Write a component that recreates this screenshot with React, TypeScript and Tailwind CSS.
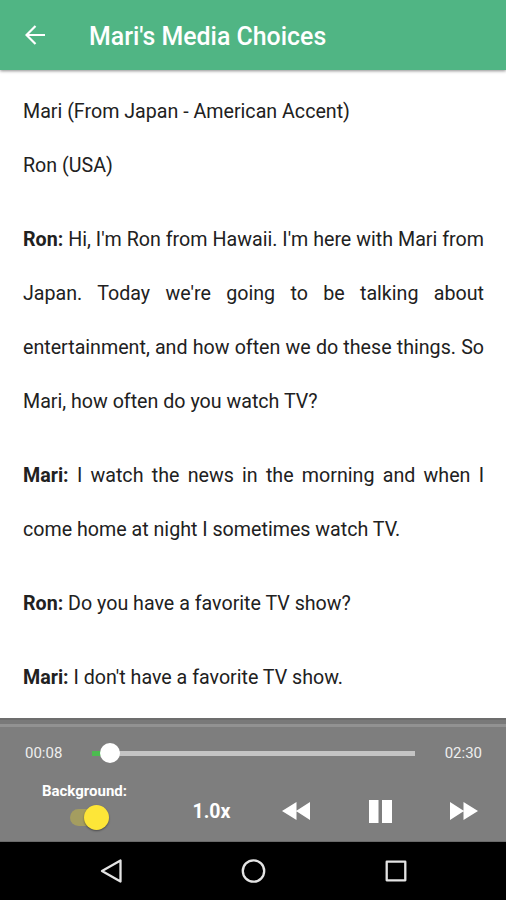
import { useState } from 'react';

interface ILine {
  speaker: string;
  text: string;
}

const LINES: ILine[] = [
  {
    speaker: 'Ron',
    text: "Hi, I'm Ron from Hawaii. I'm here with Mari from Japan. Today we're going to be talking about entertainment, and how often we do these things. So Mari, how often do you watch TV?",
  },
  {
    speaker: 'Mari',
    text: 'I watch the news in the morning and when I come home at night I sometimes watch TV.',
  },
  { speaker: 'Ron', text: 'Do you have a favorite TV show?' },
  { speaker: 'Mari', text: "I don't have a favorite TV show." },
];

const Header = ({ title }: { title: string }) => (
  <header className="relative z-10 flex h-[70px] shrink-0 items-center bg-[#50b584] pl-[25px] text-white shadow-[0_1px_3px_rgba(0,0,0,0.45)]">
    <button aria-label="Back">
      <svg width="20" height="20" viewBox="0 0 20 20" fill="none" stroke="currentColor" strokeWidth="2.2">
        <path d="M20 10H2M10.5 1L1.5 10l9 9" />
      </svg>
    </button>
    <h1 className="ml-[44px] mt-1 text-[24.9px] font-medium leading-8">{title}</h1>
  </header>
);

const Transcript = () => (
  <main className="flex-1 overflow-hidden pl-[23px] pr-[22px] pt-[15px] text-[19.65px] leading-[54px] text-[#212121]">
    <p className="mb-5">
      Mari (From Japan - American Accent)
      <br />
      Ron (USA)
    </p>
    {LINES.map((line, index) => (
      <p key={index} className="mb-5 text-justify">
        <b className="font-bold">{`${line.speaker}:`}</b> {line.text}
      </p>
    ))}
  </main>
);

const Player = () => {
  const [playing, setPlaying] = useState(true);
  const [background, setBackground] = useState(true);

  return (
    <section className="h-[124px] shrink-0 bg-[#7e7e7e] text-white">
      <div className="h-[2px] bg-[#6d6d6d]" />
      <div className="h-1 bg-[#797979]" />
      <div className="h-[3px] bg-[#929292]" />

      {/* Progress */}
      <div className="flex h-[52px] items-center pl-[25px] pr-6 text-[15px] text-[#eeeeee]">
        <span className="w-[67px]">00:08</span>
        <div className="relative flex h-5 w-[323px] items-center">
          <div className="h-[5px] w-[18px] bg-[#4cbb50]" />
          <div className="h-[5px] flex-1 bg-[#c4c4c4]" />
          <div className="absolute left-2 top-0 size-5 rounded-full bg-white" />
        </div>
        <span className="ml-auto">02:30</span>
      </div>

      {/* Controls */}
      <div className="flex h-[62px]">
        <div className="flex w-[169px] flex-col items-center pt-[3px]">
          <span className="text-[15px] font-bold leading-[18px]">Background:</span>
          <button
            aria-label="Background"
            onClick={() => setBackground(!background)}
            className="ml-[7px] mt-[5px] flex h-[25px] w-[38px] items-center pl-px"
          >
            <span className="h-[17px] w-[30px] shrink-0 rounded-full bg-[#a49d60]" />
            <span
              className={`-ml-4 size-[25px] shrink-0 rounded-full shadow-[0_1px_2px_rgba(0,0,0,0.4)] ${background ? 'bg-[#fde638]' : 'bg-gray-200'}`}
            />
          </button>
        </div>
        <div className="flex flex-1 items-start pl-[23px] pt-[15px]">
          <button className="h-[34px] w-[39px] pt-0.5 text-[19.5px] font-bold">1.0x</button>
          <button aria-label="Rewind" className="ml-[51px] flex h-[34px] items-center">
            <svg width="28" height="18" viewBox="0 0 28 18" fill="currentColor">
              <path d="M14.5 0v18L0 9zM28 0v18L14 9z" />
            </svg>
          </button>
          <button
            aria-label="Play or pause"
            onClick={() => setPlaying(!playing)}
            className="ml-[59px] flex h-[34px] items-center"
          >
            <svg width="23" height="23" viewBox="0 0 23 23" fill="currentColor">
              {playing ? <path d="M0 0h9.5v23H0zM13 0h10v23H13z" /> : <path d="M2 0l20 11.5L2 23z" />}
            </svg>
          </button>
          <button aria-label="Forward" className="ml-[58px] flex h-[34px] items-center">
            <svg width="28" height="18" viewBox="0 0 28 18" fill="currentColor">
              <path d="M0 0v18l14-9zM13.5 0v18L28 9z" />
            </svg>
          </button>
        </div>
      </div>
      <div className="h-px bg-[#6a6a6a]" />
    </section>
  );
};

const NavBar = () => (
  <nav className="flex h-[58px] shrink-0 items-center bg-black pl-[100px] text-[#e4e4e4]">
    <svg width="24" height="24" viewBox="0 0 24 24" fill="none" stroke="currentColor" strokeWidth="2.3" strokeLinejoin="round">
      <path d="M20.5 1.5v21L2 12z" />
    </svg>
    <svg className="ml-[117px]" width="25" height="24" viewBox="0 0 25 24" fill="none" stroke="currentColor" strokeWidth="2.3">
      <circle cx="12.5" cy="12" r="10.7" />
    </svg>
    <svg className="ml-[118px]" width="24" height="24" viewBox="0 0 24 24" fill="none" stroke="currentColor" strokeWidth="2.3" strokeLinejoin="round">
      <path d="M2.7 2.7h18.6v18.6H2.7z" />
    </svg>
  </nav>
);

export default function App() {
  return (
    <div className="flex h-[900px] w-[506px] flex-col overflow-hidden bg-white font-[Roboto,sans-serif]">
      <Header title="Mari's Media Choices" />
      <Transcript />
      <Player />
      <NavBar />
    </div>
  );
}
